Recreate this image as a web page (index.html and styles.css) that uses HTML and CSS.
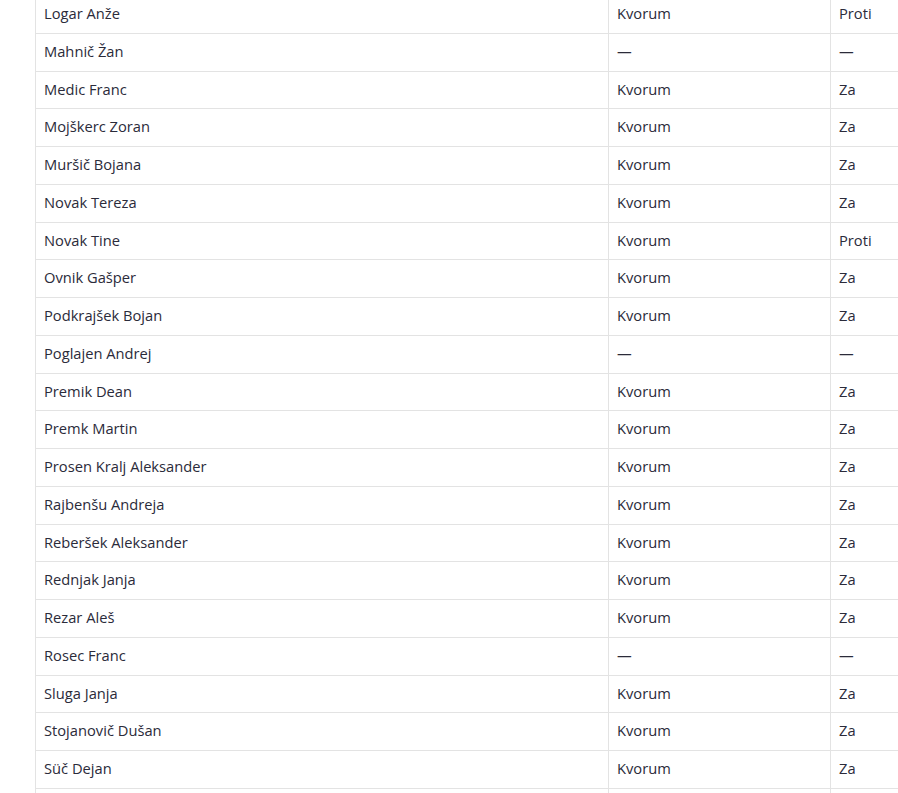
FILE: index.html
```html
<!DOCTYPE html>
<html lang="sl">
<head>
    <meta charset="UTF-8">
    <title>Glasovanje</title>
    <link rel="stylesheet" href="styles.css">
</head>
<body>
    <div class="wrap">
        <table class="glasovi">
            <colgroup>
                <col class="c-ime">
                <col class="c-kvorum">
                <col class="c-glas">
            </colgroup>
            <tbody>
                <tr><td>Logar Anže</td><td>Kvorum</td><td>Proti</td></tr>
                <tr><td>Mahnič Žan</td><td>—</td><td>—</td></tr>
                <tr><td>Medic Franc</td><td>Kvorum</td><td>Za</td></tr>
                <tr><td>Mojškerc Zoran</td><td>Kvorum</td><td>Za</td></tr>
                <tr><td>Muršič Bojana</td><td>Kvorum</td><td>Za</td></tr>
                <tr><td>Novak Tereza</td><td>Kvorum</td><td>Za</td></tr>
                <tr><td>Novak Tine</td><td>Kvorum</td><td>Proti</td></tr>
                <tr><td>Ovnik Gašper</td><td>Kvorum</td><td>Za</td></tr>
                <tr><td>Podkrajšek Bojan</td><td>Kvorum</td><td>Za</td></tr>
                <tr><td>Poglajen Andrej</td><td>—</td><td>—</td></tr>
                <tr><td>Premik Dean</td><td>Kvorum</td><td>Za</td></tr>
                <tr><td>Premk Martin</td><td>Kvorum</td><td>Za</td></tr>
                <tr><td>Prosen Kralj Aleksander</td><td>Kvorum</td><td>Za</td></tr>
                <tr><td>Rajbenšu Andreja</td><td>Kvorum</td><td>Za</td></tr>
                <tr><td>Reberšek Aleksander</td><td>Kvorum</td><td>Za</td></tr>
                <tr><td>Rednjak Janja</td><td>Kvorum</td><td>Za</td></tr>
                <tr><td>Rezar Aleš</td><td>Kvorum</td><td>Za</td></tr>
                <tr><td>Rosec Franc</td><td>—</td><td>—</td></tr>
                <tr><td>Sluga Janja</td><td>Kvorum</td><td>Za</td></tr>
                <tr><td>Stojanovič Dušan</td><td>Kvorum</td><td>Za</td></tr>
                <tr><td>Süč Dejan</td><td>Kvorum</td><td>Za</td></tr>
                <tr class="prazna"><td></td><td></td><td></td></tr>
            </tbody>
        </table>
    </div>
</body>
</html>
```

FILE: styles.css
```css
:root {
    --text-color: #2b2b3a;
    --border-color: #e3e3e3;
}
body {
    margin: 0;
    background: #ffffff;
    color: var(--text-color);
    font-family: 'Open Sans', 'Noto Sans', sans-serif;
    overflow: hidden;
}
.wrap {
    padding-left: 35px;
    margin-top: -5px;
}
.glasovi {
    border-collapse: collapse;
    table-layout: fixed;
    width: 920px;
    font-size: 14.7px;
}
.c-ime {
    width: 573px;
}
.c-kvorum {
    width: 222px;
}
.glasovi td {
    border: 1px solid var(--border-color);
    padding: 7px 8px 9px;
    line-height: 20.75px;
    text-align: left;
    vertical-align: middle;
}
.prazna td {
    height: 20.75px;
}
```
